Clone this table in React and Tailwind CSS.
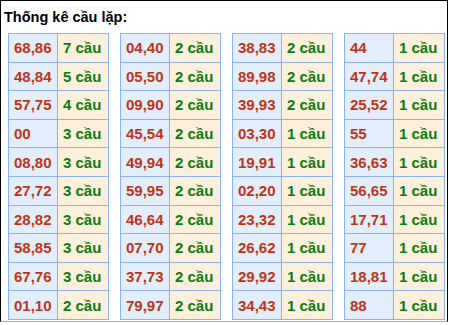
import React from 'react';

const tables = [
  [['68,86', 7], ['48,84', 5], ['57,75', 4], ['00', 3], ['08,80', 3], ['27,72', 3], ['28,82', 3], ['58,85', 3], ['67,76', 3], ['01,10', 2]],
  [['04,40', 2], ['05,50', 2], ['09,90', 2], ['45,54', 2], ['49,94', 2], ['59,95', 2], ['46,64', 2], ['07,70', 2], ['37,73', 2], ['79,97', 2]],
  [['38,83', 2], ['89,98', 2], ['39,93', 2], ['03,30', 1], ['19,91', 1], ['02,20', 1], ['23,32', 1], ['26,62', 1], ['29,92', 1], ['34,43', 1]],
  [['44', 1], ['47,74', 1], ['25,52', 1], ['55', 1], ['36,63', 1], ['56,65', 1], ['17,71', 1], ['77', 1], ['18,81', 1], ['88', 1]],
];

function CauTable({ rows }) {
  return (
    <table className="border-collapse w-[100px] table-fixed">
      <colgroup>
        <col className="w-[49px]" />
        <col className="w-[51px]" />
      </colgroup>
      <tbody>
        {rows.map(([pair, n]) => (
          <tr key={pair} className="h-[28.6px]">
            <td className="border border-[#8fb2ee] bg-[#e2eefc] pl-[5px] text-[#b8371a] font-bold">{pair}</td>
            <td className="border border-[#8fb2ee] bg-[#fdf1de] pl-[5px] text-[#0a7d12] font-bold whitespace-nowrap">{n} cầu</td>
          </tr>
        ))}
      </tbody>
    </table>
  );
}

export default function App() {
  return (
    <div className="w-[449px] h-[325px] bg-white font-['Liberation_Sans',Arial,sans-serif]">
      <div className="w-[448px] h-[322px] border-t border-l border-r border-black border-b border-b-[#b0b0b0] bg-white">
        <div className="pl-[3px] pt-[6px] h-[32px] text-[14.5px] font-bold text-black leading-[20px]">Thống kê cầu lặp:</div>
        <div className="flex gap-[11px] pl-[7px] text-[15px] leading-[17px]">
          {tables.map((rows, i) => (
            <CauTable key={i} rows={rows} />
          ))}
        </div>
      </div>
    </div>
  );
}
